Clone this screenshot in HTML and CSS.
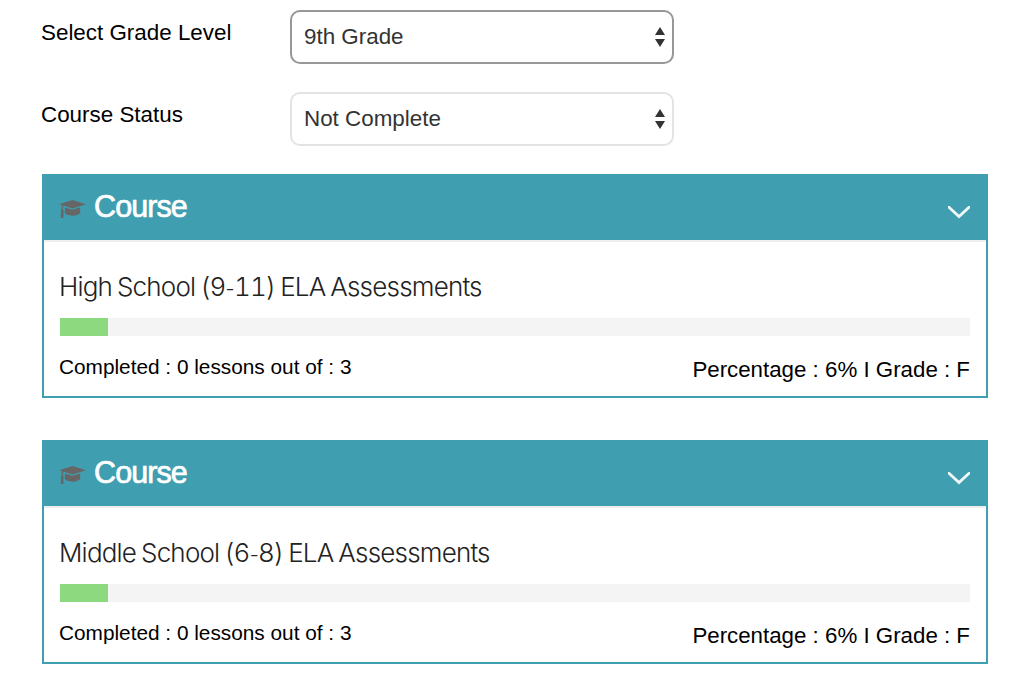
FILE: index.html
```html
<!DOCTYPE html>
<html lang="en">
<head>
    <meta charset="UTF-8">
    <meta name="viewport" content="width=device-width, initial-scale=1.0">
    <title>Courses</title>
    <link rel="stylesheet" href="styles.css">
</head>
<body>
    <form class="filters">
        <div class="filter-row">
            <label for="gradeLevel">Select Grade Level</label>
            <div class="select-box active">
                <select id="gradeLevel" name="gradeLevel">
                    <option>9th Grade</option>
                </select>
                <svg class="arrows" viewBox="0 0 10 20"><path d="M5 0l5 8H0zM0 12h10l-5 8z"/></svg>
            </div>
        </div>
        <div class="filter-row">
            <label for="courseStatus">Course Status</label>
            <div class="select-box">
                <select id="courseStatus" name="courseStatus">
                    <option>Not Complete</option>
                </select>
                <svg class="arrows" viewBox="0 0 10 20"><path d="M5 0l5 8H0zM0 12h10l-5 8z"/></svg>
            </div>
        </div>
    </form>

    <div class="course">
        <div class="course-header">
            <svg class="cap" viewBox="0 0 27 20"><path d="M13.5 1L27 5.2 13.5 9.4 5 6.800C4 7.600 3.800 8.600 3.800 10l.8 1-.2 8H1.800L2 11l.5-1c0-1.700.2-2.900.8-3.900L0 5.200zM6 8.500l7.500 2.300L21 8.500l.3 4.500c0 1.900-3.300 3.700-7.800 3.700S5.700 14.900 5.700 13z"/></svg>
            <h2>Course</h2>
            <svg class="chevron" viewBox="0 0 22 13"><path d="M-1 -0.500L11 10.500 23 -0.500"/></svg>
        </div>
        <div class="course-body">
            <h3>High School (9<span class="dash">-</span>11) ELA Assessments</h3>
            <div class="progress"><div class="progress-bar" style="width: 48px"></div></div>
            <div class="course-info">
                <span class="completed">Completed : 0 lessons out of : 3</span>
                <span class="grade">Percentage : 6% I Grade : F</span>
            </div>
        </div>
    </div>

    <div class="course">
        <div class="course-header">
            <svg class="cap" viewBox="0 0 27 20"><path d="M13.5 1L27 5.2 13.5 9.4 5 6.800C4 7.600 3.800 8.600 3.800 10l.8 1-.2 8H1.800L2 11l.5-1c0-1.700.2-2.900.8-3.900L0 5.200zM6 8.500l7.500 2.300L21 8.500l.3 4.500c0 1.900-3.300 3.700-7.800 3.700S5.700 14.900 5.700 13z"/></svg>
            <h2>Course</h2>
            <svg class="chevron" viewBox="0 0 22 13"><path d="M-1 -0.500L11 10.500 23 -0.500"/></svg>
        </div>
        <div class="course-body">
            <h3>Middle School (6<span class="dash">-</span>8) ELA Assessments</h3>
            <div class="progress"><div class="progress-bar" style="width: 48px"></div></div>
            <div class="course-info">
                <span class="completed">Completed : 0 lessons out of : 3</span>
                <span class="grade">Percentage : 6% I Grade : F</span>
            </div>
        </div>
    </div>
</body>
</html>
```
FILE: styles.css
```css
* {
    box-sizing: border-box;
}

body {
    margin: 0;
    padding: 10px 32px 0 42px;
    background: #fff;
    color: #000;
    font-family: "Liberation Sans", Arial, sans-serif;
    font-size: 22.4px;
    overflow: hidden;
}

/* Filters */
.filter-row {
    display: flex;
    height: 54px;
    margin-bottom: 28px;
}

.filter-row label {
    width: 249px;
    margin-left: -1px;
    padding-top: 10px;
    line-height: 26px;
}

.select-box {
    display: flex;
    align-items: center;
    width: 384px;
    height: 54px;
    padding: 0 7px 0 12px;
    border: 2px solid #e3e3e3;
    border-radius: 10px;
}

.select-box.active {
    border-color: #979797;
}

.select-box select {
    flex: 1;
    appearance: none;
    margin: 0;
    padding: 0 0 1px;
    border: 0;
    background: none;
    color: #333;
    font: inherit;
}

.arrows {
    width: 10px;
    height: 20px;
    fill: #333;
}

/* Course panels */
.course {
    height: 224px;
    margin-bottom: 42px;
    border: 2px solid #409eb1;
}

.course-header {
    display: flex;
    align-items: center;
    height: 64px;
    padding: 0 16px 0 15px;
    background: #409eb1;
}

.cap {
    width: 27px;
    height: 20px;
    margin-top: 2px;
    fill: #666;
}

.course-header h2 {
    flex: 1;
    margin: -4px 0 0 8px;
    color: #fff;
    font-size: 30.5px;
    font-weight: normal;
    letter-spacing: -0.9px;
    line-height: 36px;
    -webkit-text-stroke: 0.7px #fff;
}

.chevron {
    width: 22px;
    height: 13px;
    margin-top: 8px;
    fill: none;
    stroke: #f0f7f9;
    stroke-width: 2.8;
}

.course-body {
    padding: 28px 16px 0;
    border-top: 2px solid #eee;
}

.course-body h3 {
    margin: 0 0 14px -1px;
    color: #222;
    font-family: Inter, sans-serif;
    font-size: 26px;
    font-weight: 300;
    font-variant-numeric: tabular-nums;
    letter-spacing: -0.8px;
    line-height: 34px;
    white-space: nowrap;
    word-spacing: -1.3px;
}

.dash {
    font-size: 20px;
    font-variant-numeric: normal;
    line-height: 1;
}

.progress {
    height: 18px;
    background: #f4f4f4;
}

.progress-bar {
    height: 100%;
    background: #8cd980;
}

.course-info {
    display: flex;
    justify-content: space-between;
    margin-top: 18px;
}

.completed {
    margin-left: -1px;
    font-size: 20.8px;
    line-height: 26px;
}

.grade {
    padding-top: 3px;
    font-size: 22.3px;
    line-height: 26px;
}
```
